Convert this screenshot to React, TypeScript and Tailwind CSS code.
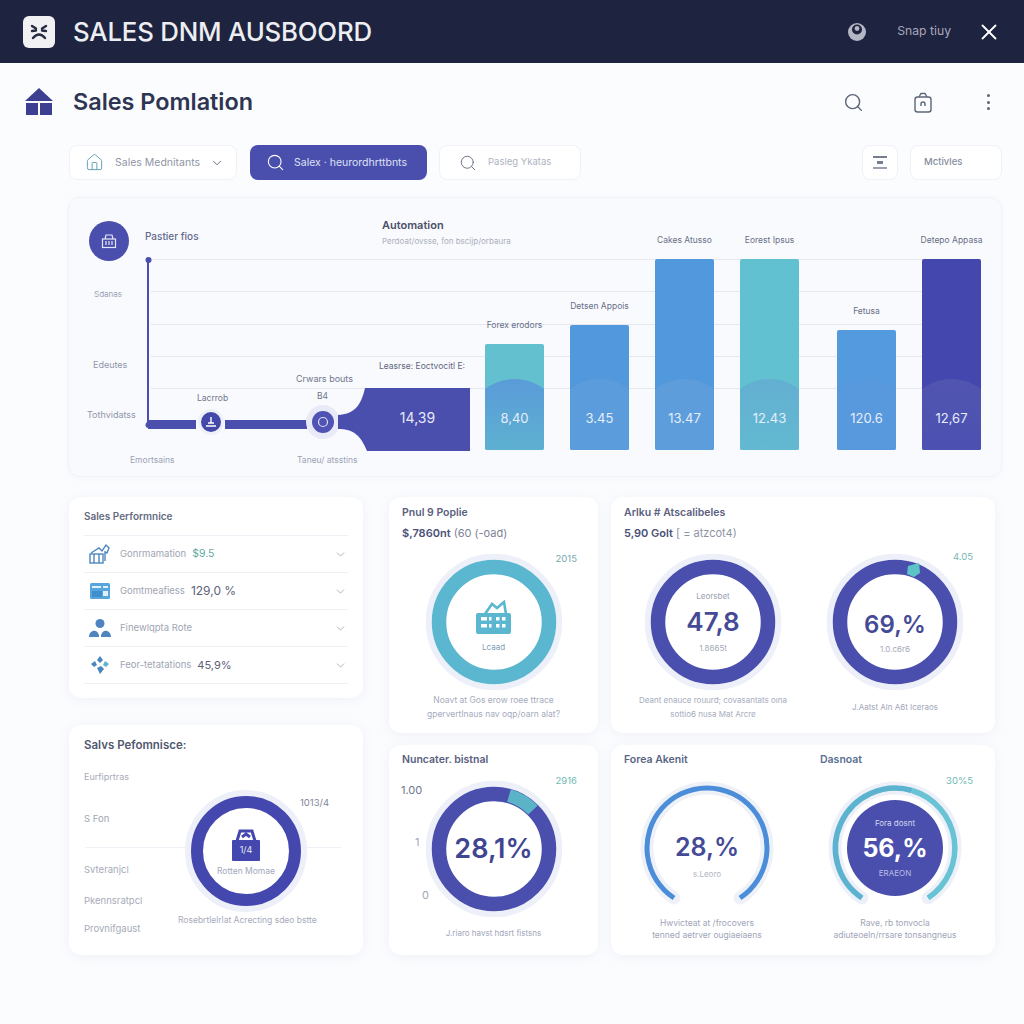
import React from "react";
import { Search, ChevronDown, X, Home } from "lucide-react";

function Ring({ color, track = "#eef0f9", r = 55, sw = 14.5, children, extra, disk }: { color: string; track?: string; r?: number; sw?: number; children?: React.ReactNode; extra?: React.ReactNode; disk?: boolean }) {
  return (
    <div className="relative w-[136px] h-[136px] shrink-0">
      <svg width="136" height="136" viewBox="0 0 136 136" className="absolute inset-0">
        {disk && <circle cx="68" cy="68" r={r + sw / 2 + 6} fill="#fff" />}
        <circle cx="68" cy="68" r={r + sw / 2 + 3} fill="none" stroke={track} strokeWidth="6" />
        <circle cx="68" cy="68" r={r} fill="none" stroke={color} strokeWidth={sw} />
        {extra}
      </svg>
      <div className="absolute inset-0 flex flex-col items-center justify-center">{children}</div>
    </div>
  );
}

function Bar({ label, value, h, color, hump, ml }: { label: string; value: string; h: string; color: string; hump: string; ml: string }) {
  return (
    <div className={`flex flex-col items-center w-[59px] ${ml}`}>
      <span className="text-[8.5px] leading-[12px] mb-[13px] text-[#686f86] whitespace-nowrap">{label}</span>
      <div className={`relative w-[59px] overflow-hidden rounded-[2px] flex flex-col justify-end items-center pb-[24px] ${h} ${color}`}>
        <div className={`absolute w-[97px] h-[97px] rounded-full left-[-19px] bottom-[-26px] ${hump}`} />
        <span className="relative text-[13px] leading-[16px] text-[#e6eefa]">{value}</span>
      </div>
    </div>
  );
}

function Row({ icon, label, value, valueClass }: { icon: React.ReactNode; label: string; value?: string; valueClass?: string }) {
  return (
    <div className="flex items-center h-[37px] border-b border-[#eef0f5] pl-[4px] pr-[1px]">
      <div className="w-[24px] h-[24px] flex items-center justify-center shrink-0">{icon}</div>
      <span className="ml-[8px] text-[9.5px] text-[#a0a5b4] whitespace-nowrap">{label}</span>
      {value && <span className={`ml-[6px] whitespace-nowrap ${valueClass}`}>{value}</span>}
      <ChevronDown size={13} strokeWidth={1.5} className="ml-auto text-[#9aa3b5]" />
    </div>
  );
}

const BagIcon = () => (
  <svg width="37" height="34" viewBox="0 0 37 34" className="mt-[8px]">
    <path d="M10 14 L17 4 L22 8 L29 2 L31 14" fill="none" stroke="#5bb6cf" strokeWidth="2.6" />
    <rect x="1" y="13" width="35" height="21" rx="2" fill="#5bb6cf" />
    <g fill="#fff">
      <rect x="6" y="17" width="6" height="3.5" />
      <rect x="6" y="24" width="6" height="3.5" />
      <rect x="14" y="17" width="2.5" height="3.5" />
      <rect x="14" y="24" width="2.5" height="3.5" />
      <rect x="21" y="17" width="3.5" height="3.5" />
      <rect x="27" y="17" width="3.5" height="3.5" />
      <rect x="21" y="24" width="3.5" height="3.5" />
      <rect x="27" y="24" width="3.5" height="3.5" />
    </g>
  </svg>
);

const card = "bg-white rounded-[12px] shadow-[0_2px_12px_rgba(90,110,170,0.08)]";

export default function App() {
  return (
    <div className="w-[1024px] h-[1024px] overflow-hidden bg-[#fbfcfe] font-['Inter','Liberation_Sans',sans-serif]">
      {/* Title bar */}
      <header className="h-[63px] bg-[#1e2340] flex items-center pl-[23px] pr-[22px]">
        <div className="w-[32px] h-[32px] rounded-[6px] bg-[#f1f1f4] flex items-center justify-center">
          <svg width="20" height="20" viewBox="0 0 20 20" fill="none" stroke="#262a42" strokeWidth="2.4" strokeLinecap="round">
            <path d="M3 4 L7 6.5 M17 4 L13 6.5 M3 9 L7 8.5 M17 9 L13 8.5 M4 16 Q10 9 16 16" />
          </svg>
        </div>
        <h1 className="ml-[18px] text-[25.8px] leading-none font-medium text-[#eceef2] tracking-[-0.2px] whitespace-nowrap">SALES DNM AUSBOORD</h1>
        <svg width="20" height="20" viewBox="0 0 20 20" className="ml-auto">
          <circle cx="10" cy="10" r="9" fill="#b4b6c4" />
          <circle cx="10" cy="7.5" r="5" fill="#1e2340" />
          <circle cx="10" cy="6.5" r="2.4" fill="#b4b6c4" />
        </svg>
        <span className="ml-[30px] text-[12.2px] text-[#a6a9b9] whitespace-nowrap">Snap tiuy</span>
        <X size={26} strokeWidth={1.7} className="ml-[25px] text-white" />
      </header>

      {/* Page heading */}
      <div className="h-[78px] flex items-center pl-[25px] pr-[34px]">
        <svg width="28" height="28" viewBox="0 0 28 28">
          <path d="M14 0 L28 13 L0 13 Z" fill="#3d4090" />
          <path d="M1 15 H13 V27 H1 Z M15 15 H27 V27 H15 Z" fill="#3d4090" />
        </svg>
        <h2 className="ml-[20px] text-[23.4px] leading-none font-semibold text-[#2e3552] whitespace-nowrap">Sales Pomlation</h2>
        <Search size={21} strokeWidth={1.6} className="ml-auto text-[#5d6678]" />
        <svg width="20" height="21" viewBox="0 0 20 21" fill="none" stroke="#5d6678" strokeWidth="1.4" className="ml-[49px]">
          <rect x="2" y="5" width="16" height="15" rx="2.5" />
          <path d="M6 5 L8 1.5 H12 L14 5 M8 14 V12 A2 2 0 0 1 12 12 V14" />
        </svg>
        <div className="ml-[54px] flex flex-col gap-[3.5px]">
          <span className="w-[3px] h-[3px] rounded-full bg-[#5d6678]" />
          <span className="w-[3px] h-[3px] rounded-full bg-[#5d6678]" />
          <span className="w-[3px] h-[3px] rounded-full bg-[#5d6678]" />
        </div>
      </div>

      {/* Toolbar */}
      <div className="mt-[4px] flex pl-[69px] pr-[22px] h-[35px]">
        <div className="w-[168px] rounded-[8px] border border-[#f0f2f7] bg-white flex items-center pl-[15px]">
          <Home size={19} strokeWidth={1.2} className="text-[#5f9eb4]" />
          <span className="ml-[11px] text-[10.5px] text-[#8f95a6] whitespace-nowrap">Sales Mednitants</span>
          <ChevronDown size={14} strokeWidth={1.6} className="ml-[10px] text-[#5d6678]" />
        </div>
        <div className="ml-[13px] w-[177px] rounded-[8px] bg-[#4a4fae] flex items-center pl-[16px]">
          <Search size={19} strokeWidth={1.4} className="text-white" />
          <span className="ml-[9px] text-[10.5px] text-[#dfe1f2] whitespace-nowrap">Salex · heurordhrttbnts</span>
        </div>
        <div className="ml-[12px] w-[142px] rounded-[8px] border border-[#f0f2f7] bg-white flex items-center pl-[19px]">
          <Search size={18} strokeWidth={1.3} className="text-[#6c7486]" />
          <span className="ml-[11px] text-[9.5px] text-[#aeb3c1] whitespace-nowrap">Pasleg Ykatas</span>
        </div>
        <div className="ml-auto w-[36px] rounded-[8px] border border-[#f0f2f7] bg-white flex flex-col items-center justify-center gap-[3px]">
          <span className="w-[14px] h-[2px] bg-[#767d90]" />
          <span className="w-[6px] h-[3px] bg-[#767d90]" />
          <span className="w-[14px] h-[2px] bg-[#9aa0b0]" />
        </div>
        <div className="ml-[12px] w-[92px] rounded-[8px] border border-[#f0f2f7] bg-white flex items-center pl-[13px]">
          <span className="text-[9.5px] font-medium text-[#868c9e] whitespace-nowrap">Mctivles</span>
        </div>
      </div>

      {/* Main chart */}
      <section className="relative mt-[17px] ml-[68px] w-[934px] h-[280px] rounded-[12px] border border-[#f1f3f8] bg-[#f9fafe] shadow-[0_1px_6px_rgba(90,110,170,0.05)] flex">
        <div className="absolute left-[82px] right-[21px] top-[61px] h-[130px] flex flex-col justify-between">
          <div className="h-px bg-[#e6e8f1]" />
          <div className="h-px bg-[#e6e8f1]" />
          <div className="h-px bg-[#e6e8f1]" />
          <div className="h-px bg-[#e6e8f1]" />
          <div className="h-px bg-[#e6e8f1]" />
        </div>

        <div className="relative w-[416px] flex flex-col">
          <div className="h-[63px] flex items-start pl-[20px] pt-[23px]">
            <div className="w-[40px] h-[40px] shrink-0 rounded-full bg-[#4a4fae] flex items-center justify-center">
              <svg width="16" height="16" viewBox="0 0 16 16" fill="none" stroke="#e6e7f5" strokeWidth="1.2">
                <path d="M4 6 L5 2 H11 L12 6" />
                <rect x="1.5" y="6" width="13" height="8.5" />
                <path d="M5 8 V12 M8 8 V12 M11 8 V12" />
              </svg>
            </div>
            <span className="ml-[16px] w-[52px] mt-[8px] text-[10px] font-medium leading-[14px] text-[#636a8e] whitespace-nowrap">Pastier fios</span>
            <div className="ml-[185px] mt-[-3px] flex flex-col">
              <span className="text-[11px] font-semibold leading-[14px] text-[#4a5068] whitespace-nowrap">Automation</span>
              <span className="mt-[3px] text-[8px] leading-[12px] text-[#a9aebd] whitespace-nowrap">Perdoat/ovsse, fon bscijp/orbaura</span>
            </div>
          </div>
          <div className="relative flex-1">
            <svg width="416" height="280" viewBox="0 0 416 280" className="absolute left-0 top-[-63px] overflow-visible">
              <path d="M79 61 V226" stroke="#4a4fae" strokeWidth="2" />
              <circle cx="79.5" cy="62" r="3" fill="#4a4fae" />
              <circle cx="79.5" cy="227" r="3" fill="#4a4fae" />
              <rect x="79" y="222" width="48" height="9" fill="#4a4fae" />
              <rect x="156" y="222" width="82" height="9" fill="#4a4fae" />
              <circle cx="142" cy="224" r="13" fill="#eef0fa" />
              <circle cx="142" cy="224" r="10" fill="#4448a8" />
              <path d="M137 228 H147 M139 225 H145 M142 219 V225" stroke="#fff" strokeWidth="1.4" />
              <circle cx="254" cy="224" r="17" fill="#e8eaf7" />
              <circle cx="254" cy="224" r="11" fill="#4f53b3" />
              <circle cx="254" cy="224" r="4.5" fill="none" stroke="#dfe1f5" strokeWidth="1.2" />
              <path d="M269 217 C285 216 292 208 296 190 H401 V253 H298 C292 238 285 231 269 231 Z" fill="#4a4fae" />
            </svg>
            <span className="absolute left-[25px] top-[27px] text-[8px] text-[#9ca2b4] leading-[12px]">Sdanas</span>
            <span className="absolute left-[24px] top-[98px] text-[9px] text-[#8f96a9] leading-[12px]">Edeutes</span>
            <span className="absolute left-[18px] top-[148px] text-[9px] text-[#8f96a9] leading-[12px]">Tothvidatss</span>
            <span className="absolute left-[61px] top-[193px] text-[8.5px] text-[#9ca2b4] leading-[12px]">Emortsains</span>
            <span className="absolute left-[128px] top-[131px] text-[8.5px] text-[#6f768a] leading-[12px]">Lacrrob</span>
            <span className="absolute left-[227px] top-[112px] text-[9px] text-[#6f768a] leading-[12px]">Crwars bouts</span>
            <span className="absolute left-[248px] top-[129px] text-[8.5px] text-[#6f768a] leading-[12px]">B4</span>
            <span className="absolute left-[228px] top-[193px] text-[8.5px] text-[#9ca2b4] leading-[12px] whitespace-nowrap">Taneu/ atsstins</span>
            <span className="absolute left-[310px] top-[99px] text-[8.5px] text-[#5f667c] leading-[12px] whitespace-nowrap">Leasrse: Eoctvocitl E:</span>
            <span className="absolute left-[296px] top-[148px] w-[105px] text-center text-[14px] text-[#e6e8f7] leading-[18px]">14,39</span>
          </div>
        </div>

        <div className="relative flex items-end pb-[26px]">
          <Bar label="Forex erodors" value="8,40" h="h-[106px]" color="bg-[#63c1cf]" hump="bg-gradient-to-b from-[#5a9bd9] to-[#5fb8cc]" ml="" />
          <Bar label="Detsen Appois" value="3.45" h="h-[125px]" color="bg-[#5298dd]" hump="bg-[#5a9cdc]" ml="ml-[26px]" />
          <Bar label="Cakes Atusso" value="13.47" h="h-[191px]" color="bg-[#5298dd]" hump="bg-[#5d9ddb]" ml="ml-[26px]" />
          <Bar label="Eorest Ipsus" value="12.43" h="h-[191px]" color="bg-[#62c1d0]" hump="bg-gradient-to-b from-[#63afd2] to-[#62bdd0]" ml="ml-[26px]" />
          <Bar label="Fetusa" value="120.6" h="h-[120px]" color="bg-[#549ade]" hump="bg-[#5898dc]" ml="ml-[38px]" />
          <Bar label="Detepo Appasa" value="12,67" h="h-[191px]" color="bg-[#4347ae]" hump="bg-gradient-to-b from-[#5155b0] to-[#4a4fb2]" ml="ml-[26px]" />
        </div>
      </section>

      {/* Lower cards */}
      <div className="mt-[20px] ml-[69px] flex items-start">
        <div className="w-[294px] flex flex-col gap-[27px]">
          <div className={`${card} h-[201px] px-[15px] pt-[12px]`}>
            <h3 className="text-[10px] leading-[14px] font-semibold text-[#656b7f] h-[26px]">Sales Performnice</h3>
            <div className="border-t border-[#eef0f5]">
              <Row
                label="Gonrmamation"
                value="$9.5"
                valueClass="text-[10.5px] text-[#62a7a5]"
                icon={
                  <svg width="22" height="22" viewBox="0 0 22 22" fill="none" stroke="#4f86bd" strokeWidth="1.4">
                    <rect x="1" y="11" width="13" height="9" />
                    <path d="M5 11 V20 M10 11 V20 M2 10 L10 5 L13 8 L17 2 L20 5 L18 10 L16 9 V18" />
                  </svg>
                }
              />
              <Row
                label="Gomtmeafiess"
                value="129,0 %"
                valueClass="text-[12px] text-[#5c6278]"
                icon={
                  <svg width="20" height="16" viewBox="0 0 20 16">
                    <rect width="20" height="16" rx="1.5" fill="#56a5dc" />
                    <rect x="2" y="3" width="9" height="2" fill="#dff0fa" />
                    <rect x="13" y="3" width="5" height="2" fill="#dff0fa" />
                    <rect x="2" y="8" width="10" height="6" fill="#3f8fca" />
                    <rect x="13" y="8" width="5" height="5" fill="#dff0fa" />
                  </svg>
                }
              />
              <Row
                label="Finewlqpta Rote"
                icon={
                  <svg width="22" height="20" viewBox="0 0 22 20" fill="#4f84c0">
                    <circle cx="11" cy="5.5" r="4.5" />
                    <path d="M0 19 C0 12 8 10 10 17 V19 Z M22 19 C22 12 14 10 12 17 V19 Z" />
                  </svg>
                }
              />
              <Row
                label="Feor-tetatations"
                value="45,9%"
                valueClass="text-[11px] text-[#5c6278]"
                icon={
                  <svg width="18" height="18" viewBox="0 0 18 18" fill="#4a86bd">
                    <path d="M9 0 L12 4 L9 7 L6 4 Z" />
                    <path d="M0 8 L4 5 L6 9 L3 11 Z" />
                    <path d="M18 8 L14 5 L12 9 L15 11 Z" fill="#5bb6cf" />
                    <path d="M6 12 L10 10 L13 13 L9 18 Z" />
                  </svg>
                }
              />
            </div>
          </div>

          <div className={`${card} h-[230px] relative flex pl-[15px] pt-[12px]`}>
            <div className="w-[92px] flex flex-col">
              <h3 className="text-[11.5px] leading-[16px] font-semibold text-[#515870] whitespace-nowrap">Salvs Pefomnisce:</h3>
              <span className="mt-[17px] text-[9px] leading-[14px] text-[#a6abb9]">Eurfiprtras</span>
              <span className="mt-[28px] text-[9.5px] leading-[14px] text-[#a0a5b4]">S Fon</span>
              <span className="mt-[37px] text-[9.5px] leading-[14px] text-[#a6abb9]">Svteranjcl</span>
              <span className="mt-[17px] text-[9.5px] leading-[14px] text-[#a6abb9] whitespace-nowrap">Pkennsratpcl</span>
              <span className="mt-[14px] text-[9.5px] leading-[14px] text-[#a6abb9] whitespace-nowrap">Provnifgaust</span>
            </div>
            <div className="absolute left-[16px] right-[22px] top-[122px] h-px bg-[#eef0f5]" />
            <div className="relative ml-[2px] mt-[46px]">
              <span className="absolute left-[122px] top-[13px] text-[9.5px] leading-[14px] text-[#7f8598] whitespace-nowrap">1013/4</span>
              <Ring color="#4347ae" r={49} sw={12} disk>
                <div className="relative w-[30px] h-[34px] mt-[2px]">
                  <svg width="30" height="34" viewBox="0 0 30 34" className="absolute inset-0">
                    <path d="M6 13 L9 3 H21 L24 13 M11 9 L15 6 L19 9" fill="none" stroke="#4347ae" strokeWidth="3" />
                    <rect x="1" y="12" width="28" height="21" rx="1" fill="#4347ae" />
                  </svg>
                  <span className="absolute left-0 right-0 top-[15px] text-center text-[9px] leading-[14px] text-[#e6e7f5]">1/4</span>
                </div>
                <span className="text-[8.5px] leading-[12px] mt-[3px] text-[#a3a8bd] whitespace-nowrap">Rotten Momae</span>
              </Ring>
              <p className="absolute left-0 top-[131px] text-[8.5px] leading-[12px] text-[#a6abbd] whitespace-nowrap">Rosebrtlelrlat Acrecting sdeo bstte</p>
            </div>
          </div>
        </div>

        <div className="ml-[26px] grid grid-cols-[209px_384px] grid-rows-[236px_210px] gap-x-[13px] gap-y-[12px]">
          <div className={`${card} relative flex flex-col px-[13px] pt-[8px]`}>
            <h3 className="text-[10.5px] leading-[16px] font-semibold text-[#5a6080]">Pnul 9 Poplie</h3>
            <p className="mt-[4px] text-[11px] leading-[16px] whitespace-nowrap text-[#4a5078]"><span className="font-semibold">$,7860nt</span> <span className="text-[#7d8397]">(60 (-oad)</span></p>
            <span className="absolute right-[21px] top-[55px] text-[9.5px] text-[#76a8b0]">2015</span>
            <div className="mt-[13px] self-center">
              <Ring color="#5bb6cf">
                <BagIcon />
                <span className="text-[8px] mt-[7px] leading-[12px] text-[#7f9cb5]">Lcaad</span>
              </Ring>
            </div>
            <p className="mt-[3px] text-center text-[8.5px] leading-[14px] text-[#a6abbd] whitespace-nowrap">Noavt at Gos erow roee ttrace<br />gpervertlnaus nav oqp/oarn alat?</p>
          </div>

          <div className={`${card} relative pl-[13px] pt-[8px]`}>
            <h3 className="text-[10.5px] leading-[16px] font-semibold text-[#5a6080]">Arlku # Atscalibeles</h3>
            <p className="mt-[4px] text-[11px] leading-[16px] whitespace-nowrap text-[#4a5078]"><span className="font-semibold">5,90 Golt</span> <span className="text-[#8d93a5]">[ = atzcot4)</span></p>
            <span className="absolute right-[22px] top-[53px] text-[9.5px] text-[#76b5b3]">4.05</span>
            <div className="mt-[13px] flex gap-[4px]">
              <div className="w-[178px] flex flex-col items-center">
                <Ring color="#4a4fae">
                  <span className="text-[8px] leading-[12px] text-[#9a9fb0]">Leorsbet</span>
                  <span className="my-[5px] text-[26px] leading-[30px] font-semibold text-[#454a96]">47,8</span>
                  <span className="text-[8px] leading-[12px] text-[#a4a9b8]">1.8665t</span>
                </Ring>
                <p className="mt-[3px] text-center text-[8px] leading-[14px] text-[#a6abbd] whitespace-nowrap">Deant enauce rouurd; covasantats oına<br />sottio6 nusa Mat Arcre</p>
              </div>
              <div className="w-[178px] flex flex-col items-center">
                <Ring
                  color="#4a4fae"
                  extra={
                    <path d="M81 12 L92 9 L93 19 L87 23 L80 20 Z" fill="#5cc4c8" />
                  }
                >
                  <span className="text-[24px] leading-[30px] font-semibold text-[#454a96] mt-[20px]">69,%</span>
                  <span className="mt-[3px] text-[8px] leading-[12px] text-[#a4a9b8]">1.0.c6r6</span>
                </Ring>
                <p className="mt-[10px] text-center text-[8px] leading-[14px] text-[#a0a5b8] whitespace-nowrap">J.Aatst Aln A6t Iceraos</p>
              </div>
            </div>
          </div>

          <div className={`${card} relative flex flex-col px-[13px] pt-[7px]`}>
            <h3 className="text-[10.5px] leading-[16px] font-semibold text-[#5a6080] whitespace-nowrap">Nuncater. bistnal</h3>
            <span className="absolute right-[21px] top-[29px] text-[9.5px] text-[#6fbab5]">2916</span>
            <span className="absolute left-[12px] top-[37px] text-[11px] leading-[16px] text-[#6e7590]">1.00</span>
            <span className="absolute left-[26px] top-[89px] text-[11px] leading-[16px] text-[#a0a5b4]">1</span>
            <span className="absolute left-[33px] top-[142px] text-[11px] leading-[16px] text-[#a0a5b4]">0</span>
            <div className="mt-[13px] self-center">
              <Ring
                color="#4a4fae"
                extra={
                  <path d="M 83 14.5 A 55.5 55.5 0 0 1 107 29" fill="none" stroke="#5bb3c7" strokeWidth="13" />
                }
              >
                <span className="text-[27px] leading-[32px] font-semibold text-[#3f4590]">28,1%</span>
              </Ring>
            </div>
            <p className="mt-[9px] text-center text-[8px] leading-[14px] text-[#a0a5b8] whitespace-nowrap">J.riaro havst hdsrt fistsns</p>
          </div>

          <div className={`${card} relative pl-[13px] pt-[7px]`}>
            <div className="flex">
              <h3 className="w-[196px] text-[10.5px] leading-[16px] font-semibold text-[#5a6586]">Forea Akenit</h3>
              <h3 className="text-[10.5px] leading-[16px] font-semibold text-[#5a6f92]">Dasnoat</h3>
            </div>
            <span className="absolute right-[22px] top-[29px] text-[9.5px] text-[#6fbab5]">30%5</span>
            <div className="mt-[12px] flex gap-[4px]">
              <div className="w-[178px] flex flex-col items-center pr-[12px]">
                <div className="relative w-[136px] h-[136px]">
                  <svg width="136" height="136" viewBox="0 0 136 136" className="absolute inset-0">
                    <path d="M 35 118 A 60 60 0 1 1 101 118" fill="none" stroke="#eef1f8" strokeWidth="13" strokeLinecap="round" />
                    <path d="M 35 118 A 60 60 0 1 1 101 118" fill="none" stroke="#4b8dd8" strokeWidth="5" />
                  </svg>
                  <div className="absolute inset-0 flex flex-col items-center justify-center">
                    <span className="text-[25px] leading-[30px] font-semibold text-[#454a96] mt-[16px]">28,%</span>
                    <span className="mt-[6px] text-[8px] leading-[12px] text-[#b0b5c4]">s.Leoro</span>
                  </div>
                </div>
                <p className="mt-[1px] text-center text-[8.5px] leading-[12px] text-[#a0a5b8] whitespace-nowrap">Hwvicteat at /frocovers<br />tenned aetrver ougiaeiaens</p>
              </div>
              <div className="w-[178px] flex flex-col items-center">
                <div className="relative w-[136px] h-[136px]">
                  <svg width="136" height="136" viewBox="0 0 136 136" className="absolute inset-0">
                    <path d="M 35 118 A 60 60 0 1 1 101 118" fill="none" stroke="#eef0f9" strokeWidth="13" strokeLinecap="round" />
                    <path d="M 35 118 A 60 60 0 0 1 85 10.5" fill="none" stroke="#5bb3cf" strokeWidth="5.5" />
                    <path d="M 85 10.5 A 60 60 0 0 1 101 118" fill="none" stroke="#68c3d5" strokeWidth="5.5" />
                    <circle cx="68" cy="68" r="48" fill="#4a4fae" />
                  </svg>
                  <div className="absolute inset-0 flex flex-col items-center justify-center">
                    <span className="text-[8px] leading-[12px] text-[#d5d8f0]">Fora dosnt</span>
                    <span className="my-[3px] text-[25px] leading-[32px] font-bold text-white">56,%</span>
                    <span className="text-[8px] leading-[12px] text-[#b9bce3]">ERAEON</span>
                  </div>
                </div>
                <p className="mt-[1px] text-center text-[8.5px] leading-[12px] text-[#a0a5b8] whitespace-nowrap">Rave, rb tonvocla<br />adiuteoeln/rrsare tonsangneus</p>
              </div>
            </div>
          </div>
        </div>
      </div>
    </div>
  );
}
